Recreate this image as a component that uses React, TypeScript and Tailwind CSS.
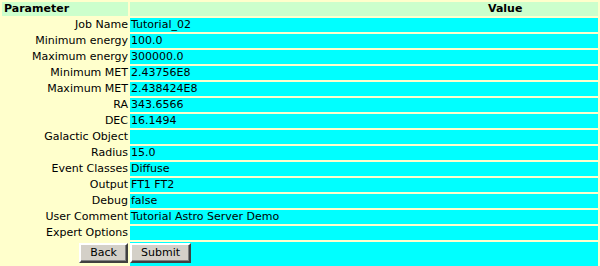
import React from "react";

const rows: [string, string][] = [
  ["Job Name", "Tutorial_02"],
  ["Minimum energy", "100.0"],
  ["Maximum energy", "300000.0"],
  ["Minimum MET", "2.43756E8"],
  ["Maximum MET", "2.438424E8"],
  ["RA", "343.6566"],
  ["DEC", "16.1494"],
  ["Galactic Object", ""],
  ["Radius", "15.0"],
  ["Event Classes", "Diffuse"],
  ["Output", "FT1 FT2"],
  ["Debug", "false"],
  ["User Comment", "Tutorial Astro Server Demo"],
  ["Expert Options", ""],
];

const btn =
  "h-[20px] bg-[#d4d0c8] px-[9px] text-[11px] leading-[14px] text-black border-2 border-t-white border-l-white border-r-[#404040] border-b-[#404040] shadow-[inset_-1px_-1px_0_#808080]";

const App: React.FC = () => {
  return (
    <div
      className="w-[600px] h-[266px] bg-[#ffffcc] overflow-hidden text-[11px] leading-[14px] text-black"
      style={{ fontFamily: '"DejaVu Sans", Verdana, sans-serif' }}
    >
      <table className="w-[600px] border-separate border-spacing-[2px] table-fixed">
        <colgroup>
          <col className="w-[126px]" />
          <col />
        </colgroup>
        <thead>
          <tr className="h-[14px]">
            <th className="bg-[#ccffcc] text-left font-bold pl-[2px] p-0">Parameter</th>
            <th className="bg-[#ccffcc] text-left font-bold pl-[358px] p-0">Value</th>
          </tr>
        </thead>
        <tbody>
          {rows.map(([label, value]) => (
            <tr key={label} className="h-[14px]">
              <td className="text-right p-0 whitespace-nowrap">{label}</td>
              <td className="bg-[#00ffff] p-0 pl-[1px] whitespace-nowrap">{value}</td>
            </tr>
          ))}
          <tr className="h-[24px]">
            <td className="text-right p-0 pt-[1px] align-top">
              <button type="button" className={btn}>
                Back
              </button>
            </td>
            <td className="bg-[#00ffff] p-0 pt-[1px] align-top">
              <button type="button" className={btn}>
                Submit
              </button>
            </td>
          </tr>
        </tbody>
      </table>
    </div>
  );
};

export default App;
